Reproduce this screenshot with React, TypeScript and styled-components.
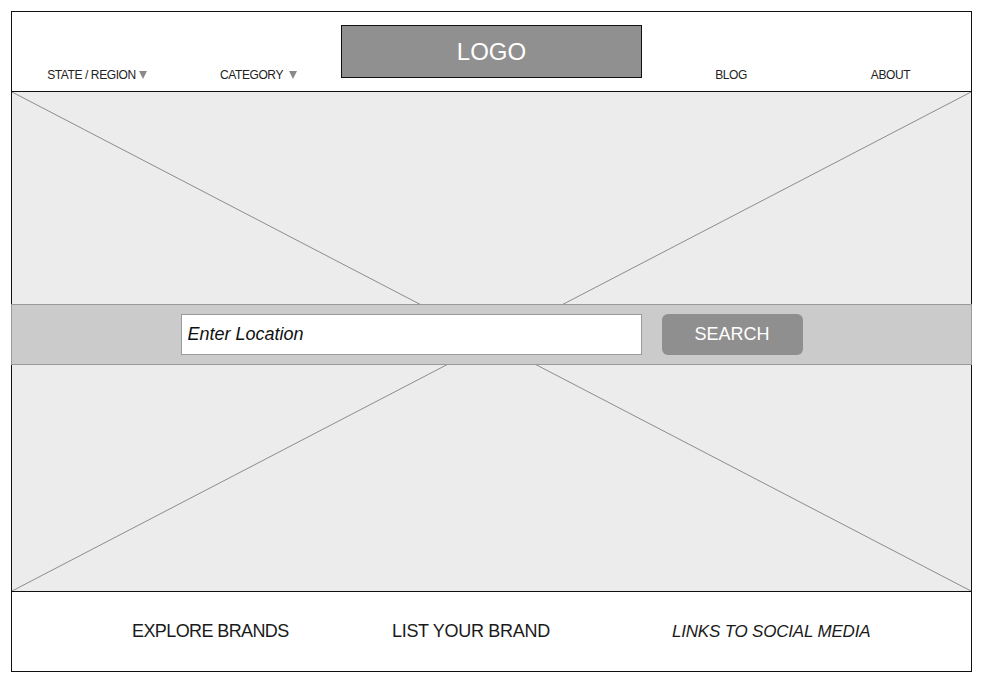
import React from 'react';
import styled, { createGlobalStyle } from 'styled-components';

const GlobalStyle = createGlobalStyle`
  * {
    box-sizing: border-box;
  }
  body {
    margin: 0;
    background: #ffffff;
    font-family: 'Liberation Sans', Arial, sans-serif;
  }
`;

const Frame = styled.div`
  margin: 11px;
  width: 961px;
  height: 661px;
  border: 1px solid #111;
  display: flex;
  flex-direction: column;
  background: #fff;
`;

const Header = styled.header`
  height: 80px;
  border-bottom: 1px solid #111;
  display: grid;
  grid-template-columns: 170px 153px 307px 178px 150px;
`;

const NavItem = styled.a<{ $padRight?: number }>`
  align-self: end;
  justify-self: center;
  margin-bottom: 9px;
  padding-right: ${p => p.$padRight ?? 0}px;
  display: flex;
  align-items: center;
  font-size: 12px;
  line-height: 14px;
  letter-spacing: -0.4px;
  color: #222;
  text-decoration: none;
  white-space: pre;
`;

const Caret = styled.span<{ $gap: number }>`
  display: inline-block;
  margin-left: ${p => p.$gap}px;
  width: 0;
  height: 0;
  border-left: 4.5px solid transparent;
  border-right: 4.5px solid transparent;
  border-top: 8px solid #8a8a8a;
`;

const Logo = styled.div`
  justify-self: end;
  margin-top: 13px;
  width: 301px;
  height: 53px;
  border: 1px solid #111;
  background: #909090;
  color: #fff;
  font-size: 24px;
  display: flex;
  align-items: center;
  justify-content: center;
`;

const Hero = styled.section`
  position: relative;
  height: 499px;
  background: #ececec;
  padding-top: 212px;
`;

const Cross = styled.svg`
  position: absolute;
  inset: 0;
  width: 100%;
  height: 100%;
`;

const SearchBand = styled.div`
  position: relative;
  margin: 0 -1px;
  height: 61px;
  background: #cbcbcb;
  border: 1px solid #9a9a9a;
  display: flex;
  align-items: center;
  justify-content: center;
  gap: 20px;
`;

const LocationInput = styled.input`
  width: 461px;
  height: 41px;
  border: 1px solid #9a9a9a;
  background: #fff;
  padding: 0 6px;
  font-family: 'Liberation Sans', Arial, sans-serif;
  font-style: italic;
  font-size: 18px;
  color: #111;
  outline: none;

  &::placeholder {
    color: #111;
    opacity: 1;
  }
`;

const SearchButton = styled.button`
  width: 141px;
  height: 41px;
  border: none;
  border-radius: 6px;
  background: #8f8f8f;
  color: #fff;
  font-family: 'Liberation Sans', Arial, sans-serif;
  font-size: 18px;
  cursor: pointer;
`;

const Footer = styled.footer`
  height: 80px;
  border-top: 1px solid #111;
  display: grid;
  grid-template-columns: 260px 280px auto;
  align-items: center;
  padding-left: 120px;
`;

const FooterLink = styled.a<{ $italic?: boolean; $spacing: number }>`
  font-size: ${p => (p.$italic ? 17 : 18)}px;
  font-style: ${p => (p.$italic ? 'italic' : 'normal')};
  letter-spacing: ${p => p.$spacing}px;
  color: #1a1a1a;
  text-decoration: none;
  white-space: nowrap;
`;

export default function App() {
  return (
    <>
      <GlobalStyle />
      <Frame>
        <Header>
          <NavItem href="#">
            STATE / REGION<Caret $gap={3} />
          </NavItem>
          <NavItem href="#">
            CATEGORY<Caret $gap={6} />
          </NavItem>
          <Logo>LOGO</Logo>
          <NavItem href="#">BLOG</NavItem>
          <NavItem href="#" $padRight={9}>
            ABOUT
          </NavItem>
        </Header>
        <Hero>
          <Cross viewBox="0 0 959 499" preserveAspectRatio="none">
            <line x1="0" y1="0" x2="959" y2="499" stroke="#8c8c8c" strokeWidth="1" />
            <line x1="959" y1="0" x2="0" y2="499" stroke="#8c8c8c" strokeWidth="1" />
          </Cross>
          <SearchBand>
            <LocationInput placeholder="Enter Location" />
            <SearchButton>SEARCH</SearchButton>
          </SearchBand>
        </Hero>
        <Footer>
          <FooterLink href="#" $spacing={-0.6}>
            EXPLORE BRANDS
          </FooterLink>
          <FooterLink href="#" $spacing={-0.3}>
            LIST YOUR BRAND
          </FooterLink>
          <FooterLink href="#" $italic $spacing={-0.2}>
            LINKS TO SOCIAL MEDIA
          </FooterLink>
        </Footer>
      </Frame>
    </>
  );
}
